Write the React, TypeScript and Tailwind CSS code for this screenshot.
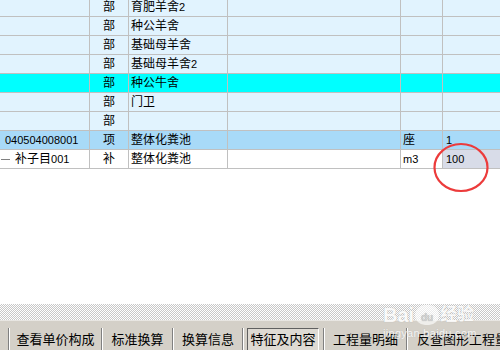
import * as React from 'react';

const font = { fontFamily: '"Liberation Sans", "Noto Sans CJK SC", sans-serif' };

interface RowData {
  code: string,
  kind: string,
  name: string,
  unit: string,
  qty: string,
  tone: 'plain' | 'cyan' | 'picked' | 'white',
}

const rows: RowData[] = [
  {code: '', kind: '部', name: '育肥羊舍2', unit: '', qty: '', tone: 'plain'},
  {code: '', kind: '部', name: '种公羊舍', unit: '', qty: '', tone: 'plain'},
  {code: '', kind: '部', name: '基础母羊舍', unit: '', qty: '', tone: 'plain'},
  {code: '', kind: '部', name: '基础母羊舍2', unit: '', qty: '', tone: 'plain'},
  {code: '', kind: '部', name: '种公牛舍', unit: '', qty: '', tone: 'cyan'},
  {code: '', kind: '部', name: '门卫', unit: '', qty: '', tone: 'plain'},
  {code: '', kind: '部', name: '', unit: '', qty: '', tone: 'plain'},
  {code: '040504008001', kind: '项', name: '整体化粪池', unit: '座', qty: '1', tone: 'picked'},
  {code: '补子目001', kind: '补', name: '整体化粪池', unit: 'm3', qty: '100', tone: 'white'},
];

function toneClass(tone: RowData['tone']) {
  if (tone === 'cyan') return 'bg-[#00ffff]';
  if (tone === 'picked') return 'bg-[#a8daf8]';
  if (tone === 'white') return 'bg-white';
  return 'bg-[#e1f3fe]';
}

function Row(p: {row: RowData}) {
  const r = p.row;
  const cell = 'h-full border-r border-[#c0c0c0] flex items-center overflow-hidden whitespace-nowrap';
  return (
    <div className={'flex h-[19px] border-b border-[#c0c0c0] text-[12px] text-black ' + toneClass(r.tone)}>
      <div className={cell + ' w-[90px]'}>
        {r.tone === 'white' ? (
          <>
            <span className="w-[9px] h-px bg-[#808080] ml-[1px] mr-[5px]"/>
            <span>补子目<span className="text-[11px]">001</span></span>
          </>
        ) : (
          <span className="pl-[5px] text-[11px]">{r.code}</span>
        )}
      </div>
      <div className={cell + ' w-[39px] justify-center'}>{r.kind}</div>
      <div className={cell + ' w-[99px] pl-[2px]'}>
        {r.name.endsWith('2') ? (
          <span>{r.name.slice(0, -1)}<span className="text-[11px]">2</span></span>
        ) : r.name}
      </div>
      <div className={cell + ' w-[173px]'}/>
      <div className={cell + ' w-[42px] pl-[2px] text-[11px]'}>
        {r.unit === '座' ? <span className="text-[12px]">座</span> : r.unit}
      </div>
      <div className={'h-full flex-1 flex items-center pl-[3px] text-[11px] ' + (r.tone === 'white' ? 'bg-[#d8dce8]' : '')}>
        {r.qty}
      </div>
    </div>
  );
}

function Sep() {
  return <div className="w-[2px] h-[24px] border-l border-[#808080] border-r border-r-white shrink-0"/>;
}

function Tab(p: {label: string, w: string, picked?: boolean}) {
  if (p.picked) {
    return (
      <div className={p.w + ' h-[24px] shrink-0 flex items-center justify-center border border-t-[#606060] border-l-[#606060] border-r-white border-b-white bg-[#dedad3] text-[13px] whitespace-nowrap'}>
        {p.label}
      </div>
    );
  }
  return (
    <div className={p.w + ' h-[24px] shrink-0 flex items-center justify-center text-[13px] whitespace-nowrap'}>
      {p.label}
    </div>
  );
}

function TabBar() {
  return (
    <div className="h-[30px] bg-[#d4d0c8] border-t border-[#e8e6e2] flex items-start pt-[7px] text-black overflow-hidden">
      <div className="w-[8px] shrink-0"/>
      <Sep/>
      <Tab label="查看单价构成" w="w-[91px]"/>
      <Sep/>
      <Tab label="标准换算" w="w-[69px]"/>
      <Sep/>
      <Tab label="换算信息" w="w-[68px]"/>
      <Sep/>
      <div className="w-[3px] shrink-0"/>
      <Tab label="特征及内容" w="w-[72px]" picked/>
      <div className="w-[4px] shrink-0"/>
      <Sep/>
      <Tab label="工程量明细" w="w-[81px]"/>
      <Sep/>
      <div className="pl-[9px] text-[13px] whitespace-nowrap h-[24px] flex items-center">反查图形工程量</div>
    </div>
  );
}

function Watermark() {
  return (
    <div className="absolute left-[383px] top-[304px] text-white opacity-80 pointer-events-none select-none">
      <div className="flex items-center h-[21px] text-[20px] font-bold leading-none [text-shadow:0_0_1px_#aaa]">
        <span>Bai</span>
        <span className="relative mx-[1px] w-[24px] h-[20px] rounded-full bg-white/80 flex items-end justify-center text-[10px] text-[#c8c8c8] pb-[2px]">
          du
        </span>
        <span className="text-[17px]">经验</span>
      </div>
      <div className="text-[11px] leading-[12px] mt-[2px] tracking-[0.3px] [text-shadow:0_0_1px_#aaa]">jingyan.baidu.com</div>
    </div>
  );
}

export default function App() {
  return (
    <div className="relative w-[500px] h-[350px] overflow-hidden bg-white flex flex-col" style={font}>
      <div className="mt-[-2px] flex flex-col">
        {rows.map((r, i) => (
          <Row key={i} row={r}/>
        ))}
      </div>
      <div className="flex-1"/>
      <div className="h-[16px] bg-[repeating-conic-gradient(#c8c8c8_0_25%,#ffffff_0_50%)] bg-[length:2px_2px]"/>
      <TabBar/>
      <Watermark/>
      <svg className="absolute left-[432px] top-[142px] pointer-events-none" width="58" height="52" viewBox="0 0 58 52">
        <ellipse cx="29" cy="25.5" rx="26.5" ry="23.5" fill="none" stroke="#ec3b3b" strokeWidth="2.2"/>
      </svg>
    </div>
  );
}
